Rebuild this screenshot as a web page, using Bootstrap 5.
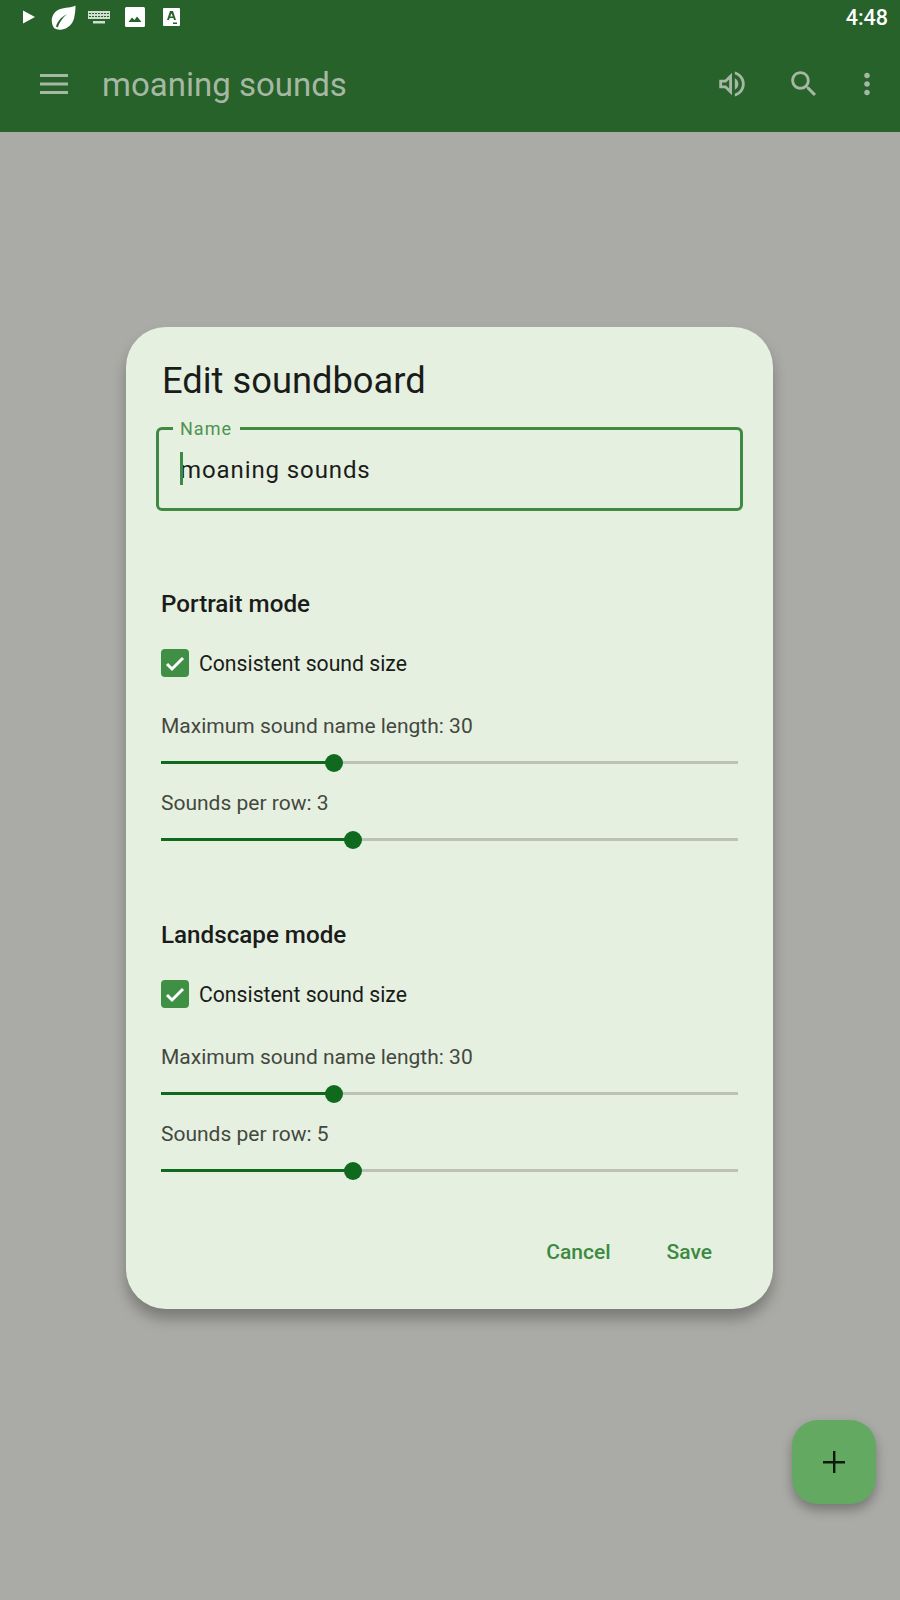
<!DOCTYPE html>
<html lang="en">
<head>
    <meta charset="UTF-8">
    <meta name="viewport" content="width=device-width, initial-scale=1.0">
    <title>Edit soundboard</title>
    <link href="https://cdn.jsdelivr.net/npm/bootstrap@5.3.2/dist/css/bootstrap.min.css" rel="stylesheet">
    <style>
        body { background: #aaaba6; font-family: Roboto, "Liberation Sans", sans-serif; width: 900px; height: 1600px; overflow: hidden; position: relative; }
        .app-top { background: #266229; height: 132px; }
        .status-row { height: 36px; padding: 0 12px 2px 22px; }
        .status-time { color: #fff; font-size: 21.5px; font-weight: 500; line-height: 1; margin-top: 2px; }
        .st-leaf { margin-left: 15px; }
        .st-keys { margin-left: 12px; }
        .st-image { margin-left: 15px; }
        .st-font { margin-left: 18px; }
        .tool-row { height: 96px; padding: 0; }
        .tool-menu { margin-left: 39px; }
        .tool-title { color: #a6b8a4; font-size: 33px; line-height: 40px; margin-left: 33px; padding-top: 2px; }
        .tool-ic { fill: #a6b8a4; display: block; }
        .tool-search { margin-left: 38px; }
        .tool-more { margin: 0 16px 0 29px; }
        .dlg { width: 647px; height: 982px; margin: 195px 0 0 126px; background: #e6f0e1; border: 0; border-radius: 40px; box-shadow: 0 10px 14px rgba(0,0,0,.28); color: #1a1c19; padding: 27px 35px 0; }
        .dlg-title { font-size: 36.3px; line-height: 54px; font-weight: 400; margin: 0 0 19px 1px; }
        .name-box { position: relative; width: 587px; height: 84px; margin-left: -5px; border: 3px solid #3f8a43; border-radius: 6px; }
        .name-label { position: absolute; left: 14px; top: -11px; padding: 0 8px 0 7px; background: #e6f0e1; color: #4d9350; font-size: 18px; line-height: 20px; letter-spacing: 1px; }
        .name-input { background: transparent; border: 0; box-shadow: none; padding: 0 0 0 21px; height: 79px; font-size: 24px; letter-spacing: .9px; color: #1a1c19; border-radius: 0; }
        .name-caret { position: absolute; left: 21px; top: 22px; width: 3px; height: 33px; background: #3f8a43; }
        .sec-head { font-size: 24.2px; font-weight: 500; line-height: 32px; margin: 0; }
        .sec-portrait { margin-top: 77px; }
        .sec-landscape { margin-top: 70px; }
        .chk-row { height: 30px; margin: 28px 0 0; padding: 0; min-height: 0; gap: 10px; }
        .chk-row .form-check-input { width: 28px; height: 28px; margin: 0; float: none; background-color: #3f8f45; border: 0; border-radius: 4px; background-size: 28px 28px; background-image: url("data:image/svg+xml,%3csvg xmlns='http://www.w3.org/2000/svg' viewBox='0 0 28 28'%3e%3cpath fill='none' stroke='%23fff' stroke-width='3' d='M6 15l5 5L22 9'/%3e%3c/svg%3e"); }
        .chk-row .form-check-label { font-size: 21.2px; line-height: 30px; padding-top: 2px; }
        .sl-label { font-size: 21px; line-height: 28px; color: #43483f; }
        .sl-label-a { margin-top: 34px; }
        .sl-label-b { margin-top: 17px; }
        .sl-track { position: relative; height: 18px; width: 577px; margin-top: 14px; }
        .sl-rail { position: absolute; left: 0; right: 0; top: 7px; height: 3px; background: #bcc3b6; }
        .sl-fill { position: absolute; left: 0; top: 7px; height: 3px; background: #0f6a1e; }
        .sl-thumb { position: absolute; top: 0; width: 18px; height: 18px; margin-left: -9px; border-radius: 50%; background: #0f6a1e; }
        .dlg-actions { margin-top: 50px; height: 44px; padding-right: 26px; gap: 56px; }
        .dlg-btn { color: #3b8a40; font-size: 21px; font-weight: 500; line-height: 44px; padding: 0; border: 0; }
        .fab-add { position: absolute; left: 792px; top: 1420px; width: 84px; height: 84px; border-radius: 26px; background: #64a962; border: 0; padding: 0; box-shadow: 0 6px 12px rgba(0,0,0,.3); }
    </style>
</head>
<body>
    <!-- app bar -->
    <header class="app-top">
        <div class="status-row d-flex align-items-center">
            <svg width="14" height="16" viewBox="0 0 14 16"><path fill="#fff" d="M1 1.500 13 8 1 14.500z"/></svg>
            <svg class="st-leaf" width="25" height="25" viewBox="0 0 25 25"><path fill="#fff" d="M24.500.5C21 3 14 2 8 4.500 2.500 7 .5 12 .8 16.500c.2 2.500 1 5 2.500 6.800C5 24.500 8 25 11 24.500c6-1 10.500-5.500 12-11 1-4 1.500-9 1.500-13zM5 21.500c1.500-5.500 5.500-9.500 11-12.500-4.500 4-7.500 8-9.300 13.500z"/></svg>
            <svg class="st-keys" width="22" height="14" viewBox="0 0 22 14"><path fill="#cfdece" d="M0 1h22v8H0zM5 11h12v2.500H5z"/><path stroke="#266229" stroke-width="1" stroke-dasharray="2 1" d="M1 3.500h20M1 6.500h20"/></svg>
            <svg class="st-image" width="20" height="20" viewBox="0 0 20 20"><rect width="20" height="20" rx="1.500" fill="#fff"/><path fill="#266229" d="M3.500 15 7 10.500l2.500 2.500 2.500-3.500 4.500 5.500z"/></svg>
            <svg class="st-font" width="17" height="18" viewBox="0 0 17 18"><rect width="17" height="18" rx="1" fill="#fff"/><path fill="#266229" d="M7 3h3l3 9h-2l-.6-2H6.600L6 12H4zm1.500 2.200L7.200 8.600h2.600zM10 14.500h4V16h-4z"/></svg>
            <span class="status-time ms-auto">4:48</span>
        </div>
        <nav class="tool-row d-flex align-items-center">
            <svg width="30" height="22" viewBox="0 0 30 22" class="tool-ic tool-menu"><path d="M1 1h28v3H1zM1 9.500h28v3H1zM1 18h28v3H1z"/></svg>
            <span class="tool-title">moaning sounds</span>
            <svg width="34" height="34" viewBox="0 0 24 24" class="tool-ic ms-auto"><path d="M3 9v6h4l5 5V4L7 9H3zm7-.17v6.340L7.830 13H5v-2h2.830L10 8.830zM16.500 12c0-1.770-1.020-3.290-2.500-4.030v8.050c1.480-.73 2.500-2.250 2.500-4.020zM14 3.230v2.060c2.890.86 5 3.540 5 6.710s-2.110 5.850-5 6.710v2.060c4.010-.91 7-4.490 7-8.770 0-4.280-2.990-7.860-7-8.770z"/></svg>
            <svg width="34" height="34" viewBox="0 0 24 24" class="tool-ic tool-search"><path d="M15.500 14h-.79l-.28-.27C15.410 12.590 16 11.110 16 9.500 16 5.910 13.090 3 9.500 3S3 5.910 3 9.500 5.910 16 9.500 16c1.610 0 3.090-.59 4.230-1.570l.27.28v.79l5 4.990L20.490 19l-4.990-5zm-6 0C7.010 14 5 11.990 5 9.500S7.010 5 9.500 5 14 7.010 14 9.500 11.990 14 9.500 14z"/></svg>
            <svg width="34" height="34" viewBox="0 0 24 24" class="tool-ic tool-more"><path d="M12 8c1.100 0 2-.9 2-2s-.9-2-2-2-2 .9-2 2 .9 2 2 2zm0 2c-1.100 0-2 .9-2 2s.9 2 2 2 2-.9 2-2-.9-2-2-2zm0 6c-1.100 0-2 .9-2 2s.9 2 2 2 2-.9 2-2-.9-2-2-2z"/></svg>
        </nav>
    </header>

    <!-- dialog -->
    <main class="card dlg">
        <h1 class="dlg-title">Edit soundboard</h1>
        <div class="name-box">
            <label class="name-label" for="sbName">Name</label>
            <input id="sbName" class="form-control name-input" type="text" value="moaning sounds">
            <span class="name-caret"></span>
        </div>

        <h2 class="sec-head sec-portrait">Portrait mode</h2>
        <div class="form-check chk-row d-flex align-items-center">
            <input class="form-check-input" type="checkbox" id="chkP" checked>
            <label class="form-check-label" for="chkP">Consistent sound size</label>
        </div>
        <div class="sl-label sl-label-a">Maximum sound name length: 30</div>
        <div class="sl-track"><div class="sl-rail"></div><div class="sl-fill" style="width:173px"></div><div class="sl-thumb" style="left:173px"></div></div>
        <div class="sl-label sl-label-b">Sounds per row: 3</div>
        <div class="sl-track"><div class="sl-rail"></div><div class="sl-fill" style="width:192px"></div><div class="sl-thumb" style="left:192px"></div></div>

        <h2 class="sec-head sec-landscape">Landscape mode</h2>
        <div class="form-check chk-row d-flex align-items-center">
            <input class="form-check-input" type="checkbox" id="chkL" checked>
            <label class="form-check-label" for="chkL">Consistent sound size</label>
        </div>
        <div class="sl-label sl-label-a">Maximum sound name length: 30</div>
        <div class="sl-track"><div class="sl-rail"></div><div class="sl-fill" style="width:173px"></div><div class="sl-thumb" style="left:173px"></div></div>
        <div class="sl-label sl-label-b">Sounds per row: 5</div>
        <div class="sl-track"><div class="sl-rail"></div><div class="sl-fill" style="width:192px"></div><div class="sl-thumb" style="left:192px"></div></div>

        <div class="dlg-actions d-flex justify-content-end">
            <button class="btn dlg-btn" type="button">Cancel</button>
            <button class="btn dlg-btn" type="button">Save</button>
        </div>
    </main>

    <button class="btn fab-add d-flex align-items-center justify-content-center" type="button" aria-label="Add">
        <svg width="22" height="22" viewBox="0 0 22 22"><path fill="#0c1a0c" d="M10 0h2.400v10H22v2.400h-9.600V22H10v-9.600H0V10h10z"/></svg>
    </button>

    <script src="https://cdn.jsdelivr.net/npm/bootstrap@5.3.2/dist/js/bootstrap.bundle.min.js"></script>
</body>
</html>
